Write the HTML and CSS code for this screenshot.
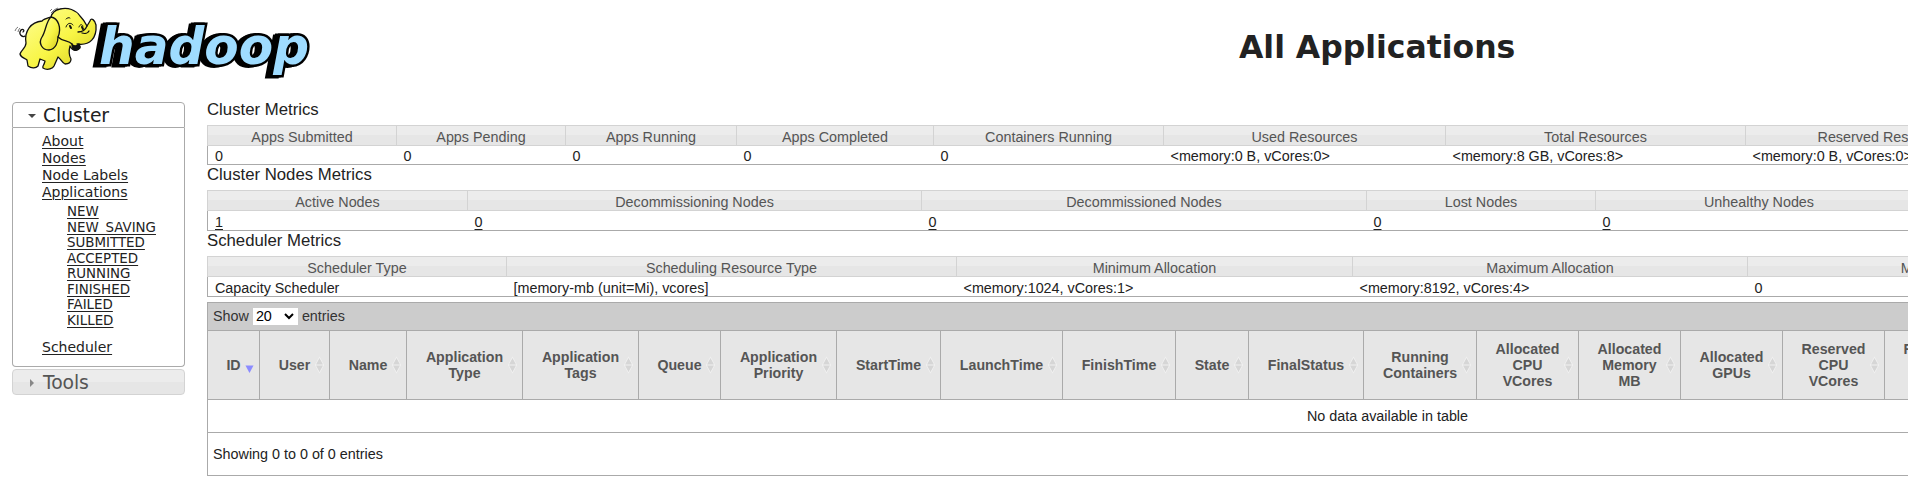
FILE: index.html
```html
<!DOCTYPE html>
<html lang="en">
<head>
<meta charset="utf-8">
<title>All Applications</title>
<link rel="stylesheet" href="styles.css">
</head>
<body>
<header class="header">
  <svg class="logo" width="302" height="76" viewBox="12 4 302 76" role="img" aria-label="hadoop">
    <defs>
      <linearGradient id="skin" x1="0" y1="0" x2="1" y2="1">
        <stop offset="0" stop-color="#ffff9c"/><stop offset=".55" stop-color="#f8f545"/><stop offset="1" stop-color="#d2c81c"/>
      </linearGradient>
    </defs>
    <use class="word-depth" href="#word" x="-5" y="1"/>
    <use class="word-depth" href="#word" x="-3"/>
    <use class="word-depth" href="#word"/>
    <text id="word" class="word" x="99" y="64" textLength="210" lengthAdjust="spacingAndGlyphs">hadoop</text>
    <g fill="url(#skin)" stroke="#111" stroke-width="1.3" stroke-linejoin="round" stroke-linecap="round">
      <path d="M26 36C22 38 18 34 21 30C23 28 25 31 23 32" fill="none"/>
      <path d="M42 21C31 22 24 31 26 43C26 48 21 50 20 54C21 58 25 58 27 60L28 66C32 69 36 68 38 66L40 59L45 61C44 66 42 66 43 68C48 71 53 68 54 66L58 57C61 59 62 63 65 64C70 64 71 62 71 59C68 54 69 50 70 46C73 52 78 51 80 48C81 46 79 45 77 44C90 46 97 38 96 25C95 20 91 17 90 21L87 26C85 22 82 18 80 16C76 10 68 7 60 9C55 10 52 13 51 17C48 18 44 19 42 21Z"/>
      <path d="M51 17C46 21 46 31 42 37C38 43 42 50 49 50C56 49 58 42 58 37C62 28 58 18 51 17Z"/>
      <path d="M58 37C63 42 68 40 72 44M87 26C85 31 81 32 78 32M82 33C85 34 88 33 89 31" fill="none"/>
      <path d="M72 44C74 47 77 46 79 44C81 48 77 51 74 50C72 49 72 47 72 44Z" fill="#111"/>
      <path d="M66 27C67 23 71 22 73 25M79 27C80 24 82 24 83 26M66 19C67 18 69 17 70 18" fill="none" stroke-width="1"/>
      <path d="M70 26L71 28M82 27L83 29" stroke-width="2"/>
    </g>
    <g fill="none" stroke="#555" stroke-width=".8">
      <path d="M15 31Q16 28 18 27M18 32Q18 30 20 28M24 36L26 35M51 13Q54 9 58 8M50 11L52 9"/>
    </g>
  </svg>
  <h1 class="title">All Applications</h1>
</header>
<div class="layout">
  <nav class="nav">
    <h3 class="nav-head"><svg class="tri" width="8" height="8"><path d="M0 2H8L4 6Z" fill="#454545"/></svg>Cluster</h3>
    <div class="nav-body">
      <ul class="links">
        <li><a>About</a></li><li><a>Nodes</a></li><li><a>Node Labels</a></li><li><a>Applications</a></li>
      </ul>
      <ul class="sublinks">
        <li><a>NEW</a></li><li><a>NEW_SAVING</a></li><li><a>SUBMITTED</a></li><li><a>ACCEPTED</a></li><li><a>RUNNING</a></li><li><a>FINISHED</a></li><li><a>FAILED</a></li><li><a>KILLED</a></li>
      </ul>
      <ul class="links"><li><a>Scheduler</a></li></ul>
    </div>
    <h3 class="nav-head closed"><svg class="tri" width="8" height="8"><path d="M2 0V8L6 4Z" fill="#888"/></svg>Tools</h3>
  </nav>
  <main class="content">
    <h2 class="caption">Cluster Metrics</h2>
    <div class="metrics cluster">
      <div class="th">Apps Submitted</div><div class="th">Apps Pending</div><div class="th">Apps Running</div><div class="th">Apps Completed</div><div class="th">Containers Running</div><div class="th">Used Resources</div><div class="th">Total Resources</div><div class="th">Reserved Resources</div>
      <div class="td">0</div><div class="td">0</div><div class="td">0</div><div class="td">0</div><div class="td">0</div><div class="td">&lt;memory:0 B, vCores:0&gt;</div><div class="td">&lt;memory:8 GB, vCores:8&gt;</div><div class="td">&lt;memory:0 B, vCores:0&gt;</div>
    </div>
    <h2 class="caption">Cluster Nodes Metrics</h2>
    <div class="metrics nodes">
      <div class="th">Active Nodes</div><div class="th">Decommissioning Nodes</div><div class="th">Decommissioned Nodes</div><div class="th">Lost Nodes</div><div class="th">Unhealthy Nodes</div>
      <div class="td"><a>1</a></div><div class="td"><a>0</a></div><div class="td"><a>0</a></div><div class="td"><a>0</a></div><div class="td"><a>0</a></div>
    </div>
    <h2 class="caption">Scheduler Metrics</h2>
    <div class="metrics scheduler">
      <div class="th">Scheduler Type</div><div class="th">Scheduling Resource Type</div><div class="th">Minimum Allocation</div><div class="th">Maximum Allocation</div><div class="th">Maximum Cluster Application Priority</div>
      <div class="td">Capacity Scheduler</div><div class="td">[memory-mb (unit=Mi), vcores]</div><div class="td">&lt;memory:1024, vCores:1&gt;</div><div class="td">&lt;memory:8192, vCores:4&gt;</div><div class="td">0</div>
    </div>
    <section class="apps">
      <div class="toolbar">Show <span class="select">20<svg width="10" height="7"><path d="M1 1L5 5L9 1" fill="none" stroke="#000" stroke-width="2"/></svg></span> entries</div>
      <div class="apps-head" id="apps-head"></div>
      <div class="empty">No data available in table</div>
      <div class="info">Showing 0 to 0 of 0 entries</div>
    </section>
  </main>
</div>
<script src="table.js"></script>
</body>
</html>
```

FILE: styles.css
```css
* { box-sizing: border-box; }
html { overflow: hidden; }
body { margin: 0; width: 1908px; height: 478px; overflow: hidden; background: #fff; color: #222; font: 14.35px/16px "Liberation Sans", Arial, sans-serif; }
ul { list-style: none; margin: 0; padding: 0; }
a { text-decoration: underline; text-underline-offset: 2px; text-decoration-thickness: 1px; }
.header { display: flex; align-items: flex-start; height: 100px; padding: 4px 0 0 12px; }
.logo { flex: none; }
.word { font: italic bold 51px "DejaVu Sans", Verdana, sans-serif; fill: #9fdcff; stroke-linejoin: miter; }
.word-depth { stroke: #000; stroke-width: 5px; }
.title { margin: 23px 0 0 925px; font: bold 31.5px/40px "DejaVu Sans", Verdana, sans-serif; letter-spacing: -0.02px; white-space: nowrap; }

.layout { display: flex; align-items: flex-start; }
.nav { flex: none; width: 173px; margin: 2px 22px 0 12px; font-family: "DejaVu Sans", Verdana, sans-serif; }
.nav-head { display: flex; align-items: center; gap: 7px; height: 26px; margin: 0; padding: 1px 0 0 14px; border: 1px solid #aaa; border-radius: 4px 4px 0 0; font-size: 18.8px; font-weight: 400; line-height: 24px; letter-spacing: -0.1px; color: #212121; }
.nav-head.closed { margin-top: 2px; border-color: #d3d3d3; border-radius: 4px; background: linear-gradient(#ececec 50%, #e6e6e6 50%); color: #555; }
.tri { flex: none; margin-left: 1px; }
.nav-body { height: 239px; padding: 5px 0 0 29px; border: 1px solid #aaa; border-top: 0; border-radius: 0 0 4px 4px; }
.links { font-size: 14px; line-height: 17px; }
.sublinks { margin: 3px 0 11px; padding-left: 25px; font-size: 13.4px; line-height: 15.5px; }

.content { flex: none; width: 2362px; }
.caption { height: 25px; margin: 0; font-size: 16.75px; font-weight: 400; line-height: 20px; }
.metrics { display: grid; border-bottom: 1px solid #aaa; white-space: nowrap; }
.cluster { grid-template-columns: 189px 169px 171px 197px 230px 282px 300px 823px; grid-template-rows: 21px 18px; }
.nodes { grid-template-columns: 260px 454px 445px 229px 973px; grid-template-rows: 21px 19px; }
.scheduler { grid-template-columns: 299px 450px 396px 395px 821px; grid-template-rows: 21px 19px; }
.th { padding-top: 3px; border: 1px solid #d3d3d3; border-right: 0; background: linear-gradient(#ececec 50%, #e6e6e6 50%); color: #555; text-align: center; }
.cluster .th:nth-child(8) { padding-right: 545px; }
.nodes .th:nth-child(5) { padding-right: 646px; }
.scheduler .th:nth-child(5) { padding-right: 281px; }
.td { padding: 3px 0 0 7.5px; }
.cluster .td { padding-top: 2px; }
.th + .td { border-left: 1px solid #aaa; padding-left: 7px; }

.apps { margin-top: 5px; border: 1px solid #aaa; }
.toolbar { display: flex; align-items: center; gap: 4px; height: 27px; padding: 0 0 1px 5px; background: #ccc; color: #333; }
.select { display: flex; align-items: center; justify-content: space-between; width: 45px; height: 17px; padding: 0 4px 0 3px; background: #fff; color: #000; }
.apps-head { display: grid; grid-template-columns: 52px 70px 77px 116px 116px 82px 116px 104px 122px 113px 73px 115px 113px 102px 102px 102px 102px 102px; height: 70px; border: solid #aaa; border-width: 1px 0; background: #e6e6e6; color: #555; font-size: 14.2px; font-weight: 700; text-align: center; }
.col { display: grid; grid-template-columns: 14px 1fr 14px; align-items: center; border-right: 1px solid #aaa; }
.col span { grid-column: 2; justify-self: center; margin: 0 -6px; }
.col svg { display: block; }
.empty { height: 33px; padding: 8px 1px 0 0; border-bottom: 1px solid #aaa; text-align: center; }
.info { height: 42px; padding: 13px 5px; }
```

FILE: table.js
```
var columns = ["ID", "User", "Name", "Application<br>Type", "Application<br>Tags", "Queue", "Application<br>Priority", "StartTime", "LaunchTime", "FinishTime", "State", "FinalStatus", "Running<br>Containers", "Allocated<br>CPU<br>VCores", "Allocated<br>Memory<br>MB", "Allocated<br>GPUs", "Reserved<br>CPU<br>VCores", "Reserved<br>Memory<br>MB"];
var sorted = '<svg width="9" height="18"><path d="M0.5 9.5H8.5L4.5 17Z" fill="#8b8bff"/></svg>';
var unsorted = '<svg width="9" height="18"><path d="M0 9L4.5 .5L9 9L4.5 17.5Z" fill="#f2f2f2"/><path d="M1 8.5L4.5 2L8 8.5ZM1 9.5H8L4.5 16Z" fill="#d6d6d6"/></svg>';
document.getElementById("apps-head").innerHTML = columns.map(function (name, i) {
  return '<div class="col"><span>' + name + "</span>" + (i === 0 ? sorted : unsorted) + "</div>";
}).join("");
```
